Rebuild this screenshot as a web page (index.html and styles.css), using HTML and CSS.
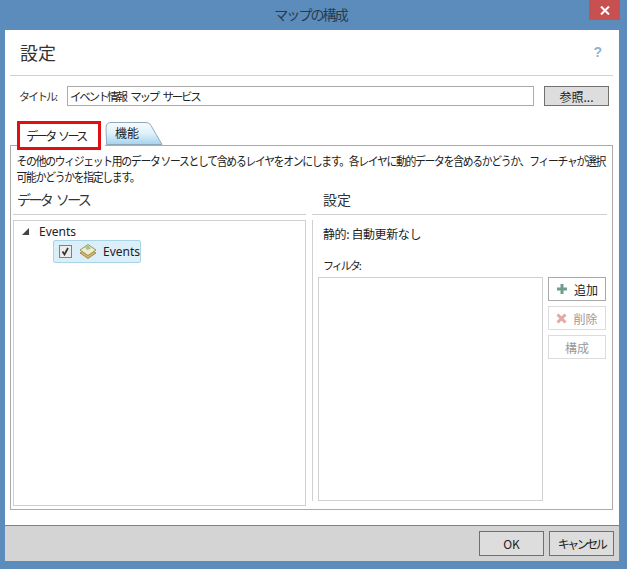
FILE: index.html
```html
<!DOCTYPE html>
<html lang="ja">
<head>
  <meta charset="UTF-8">
  <meta name="viewport" content="width=device-width, initial-scale=1.0">
  <title>マップの構成</title>
  <link rel="stylesheet" href="styles.css">
</head>
<body>
  <div class="titlebar">
    <span class="titlebar-text">マップの構成</span>
    <span class="close-btn">
      <svg width="10" height="9" viewBox="0 0 10 9"><path d="M1 0.5L9 8.5M9 0.5L1 8.5" stroke="#fff" stroke-width="2"/></svg>
    </span>
  </div>

  <div class="window">
    <div class="page-head">
      <h1>設定</h1>
      <span class="help">?</span>
    </div>

    <div class="title-row">
      <label>タイトル:</label>
      <input class="title-input" type="text" value="イベント情報 マップ サービス">
      <button class="btn browse-btn">参照...</button>
    </div>

    <div class="tabs">
      <div class="tab tab-active">データ ソース</div>
      <div class="tab tab-other">
        <svg class="tab-shape" width="58" height="23" viewBox="0 0 58 23">
          <defs>
            <linearGradient id="tabFill" x1="0" y1="0" x2="0" y2="1">
              <stop offset="0" stop-color="#f6fbfe"/>
              <stop offset="0.5" stop-color="#dff0fa"/>
              <stop offset="1" stop-color="#a5d3ef"/>
            </linearGradient>
          </defs>
          <path d="M1.5 22.5C1.5 14 0.5 5 1.5 3C2.5 1 4 0.5 6 0.5H40C43 0.5 45 1.5 46 3.5L57 22.5Z" fill="url(#tabFill)" stroke="#8fa9ba"/>
        </svg>
        <span class="tab-label">機能</span>
      </div>
      <div class="red-box"></div>
    </div>

    <div class="tab-panel">
      <p class="desc">その他のウィジェット用のデータ ソースとして含めるレイヤをオンにします。各レイヤに動的データを含めるかどうか、フィーチャが選択<br>可能かどうかを指定します。</p>

      <div class="columns">
        <div class="col-left">
          <h2>データ ソース</h2>
          <div class="tree">
            <div class="tree-root">
              <svg width="7" height="7" viewBox="0 0 7 7"><path d="M7 0V7H0Z" fill="#444"/></svg>
              <span>Events</span>
            </div>
            <div class="tree-item">
              <span class="check">
                <svg width="9" height="9" viewBox="0 0 9 9"><path d="M1.5 4.5L3.5 7.5L7 1" fill="none" stroke="#333" stroke-width="1.7"/></svg>
              </span>
              <svg class="layer-icon" width="18" height="15" viewBox="0 0 18 15">
                <path d="M9 4L17 9L9 14.5L1 9Z" fill="#d4b866" stroke="#8d7a3f" stroke-width="0.8"/>
                <path d="M9 0.5L17 6L9 11.5L1 6Z" fill="#f0ecd0" stroke="#8d7a3f" stroke-width="0.8"/>
                <path d="M6 3L9.5 1.5L12 4.5L8 6Z" fill="#a3c58a"/>
              </svg>
              <span>Events</span>
            </div>
          </div>
        </div>

        <div class="col-right">
          <h2>設定</h2>
          <div class="settings">
            <p class="static-text">静的: 自動更新なし</p>
            <p class="filter-label">フィルタ:</p>
            <div class="filter-row">
              <div class="filter-list"></div>
              <div class="filter-btns">
                <button class="btn side-btn">
                  <svg width="12" height="12" viewBox="0 0 12 12"><path d="M6 1V11M1 6H11" stroke="#6f9e8e" stroke-width="3"/></svg>
                  追加
                </button>
                <button class="btn side-btn side-off">
                  <svg width="11" height="11" viewBox="0 0 11 11"><path d="M1.5 1.5L9.5 9.5M9.5 1.5L1.5 9.5" stroke="#e3a9a3" stroke-width="3"/></svg>
                  削除
                </button>
                <button class="btn side-btn side-off">構成</button>
              </div>
            </div>
          </div>
        </div>
      </div>
    </div>

    <div class="footer">
      <button class="btn foot-btn">OK</button>
      <button class="btn foot-btn foot-cancel">キャンセル</button>
    </div>
  </div>
</body>
</html>
```

FILE: styles.css
```css
* {
  box-sizing: border-box;
}
body {
  font-family: "Noto Sans CJK JP", "Noto Sans", sans-serif;
  font-size: 12px;
  background-color: #5b8cbc;
  color: #222;
  margin: 0;
  height: 569px;
  overflow: hidden;
}
.titlebar {
  height: 30px;
  display: flex;
  justify-content: center;
  padding-top: 4px;
  padding-right: 6px;
  position: relative;
}
.titlebar-text {
  font-size: 14px;
  line-height: 20px;
  letter-spacing: -1.9px;
  color: #2c3a48;
}
.close-btn {
  position: absolute;
  top: 0;
  right: 7px;
  width: 31px;
  height: 20px;
  background-color: #c75050;
  display: flex;
  align-items: center;
  justify-content: center;
}
.window {
  margin-left: 5px;
  width: 614px;
  height: 531px;
  background: white;
  display: flex;
  flex-direction: column;
}
.page-head {
  height: 46px;
  margin-left: 5px;
  margin-right: 6px;
  border-bottom: 1px solid #d0d0d0;
  display: flex;
  justify-content: space-between;
  align-items: center;
  padding: 0 11px 0 10px;
}
.page-head h1 {
  font-size: 18px;
  font-weight: normal;
  margin: 0 0 2px;
  color: #333;
}
.help {
  font-size: 14px;
  font-weight: bold;
  color: #8fb2d2;
  font-family: "Liberation Sans", sans-serif;
  margin-bottom: 2px;
}
.title-row {
  display: flex;
  align-items: center;
  margin-top: 10px;
  padding-left: 14px;
}
.title-row label {
  width: 48px;
  font-size: 11px;
  letter-spacing: -2px;
  color: #333;
}
.title-input {
  width: 467px;
  height: 20px;
  border: 1px solid #ababab;
  padding: 0 2px;
  font-family: inherit;
  font-size: 11.5px;
  color: #222;
  outline: none;
  letter-spacing: -2.2px;
  word-spacing: 4px;
}
.btn {
  font-family: inherit;
  font-size: 12px;
  background-color: #ddd;
  border: 1px solid #707070;
  color: #222;
  padding: 0;
}
.browse-btn {
  width: 65px;
  height: 20px;
  margin-left: 10px;
}
.tabs {
  position: relative;
  height: 23px;
  margin-top: 16px;
  margin-left: 12px;
  display: flex;
}
.tab {
  height: 23px;
  line-height: 22px;
}
.tab-active {
  width: 88px;
  text-align: center;
  margin-top: 5px;
  padding-right: 10px;
  line-height: 18px;
  letter-spacing: -2.5px;
  word-spacing: 3px;
  background: white;
  position: relative;
  z-index: 2;
}
.tab-other {
  position: relative;
  width: 58px;
}
.tab-shape {
  display: block;
}
.tab-label {
  position: absolute;
  left: 10px;
  top: 0;
}
.red-box {
  position: absolute;
  left: 0;
  top: -1px;
  width: 84px;
  height: 29px;
  border: 3px solid #e01010;
  z-index: 3;
}
.tab-panel {
  margin-left: 5px;
  width: 603px;
  height: 365px;
  border: 1px solid #ababab;
  padding: 7px 5px 0 2px;
}
.desc {
  margin: 0;
  padding-left: 4px;
  font-size: 12px;
  line-height: 16px;
  letter-spacing: -1.42px;
  white-space: nowrap;
  transform: scaleX(0.9);
  transform-origin: left;
}
.columns {
  display: flex;
  margin-top: 4px;
}
.columns h2 {
  font-size: 14px;
  font-weight: normal;
  line-height: 20px;
  height: 26px;
  margin: 0;
  padding-left: 4px;
  border-bottom: 1px solid #d0d0d0;
  color: #333;
}
.col-left h2 {
  letter-spacing: -2.6px;
  word-spacing: 4px;
}
.col-left {
  width: 293px;
}
.tree {
  margin-top: 5px;
  height: 286px;
  border: 1px solid #d0d0d0;
  padding: 1px 0 0 8px;
}
.tree-root {
  display: flex;
  align-items: center;
  gap: 10px;
  height: 19px;
  font-family: "Noto Sans", sans-serif;
  font-size: 12px;
}
.tree-item {
  display: flex;
  align-items: center;
  width: 88px;
  height: 23px;
  margin-top: -1px;
  margin-left: 31px;
  padding-left: 5px;
  background-color: #dceef8;
  border: 1px solid #a9d5e8;
  border-radius: 2px;
  font-family: "Noto Sans", sans-serif;
  font-size: 12px;
}
.check {
  width: 13px;
  height: 13px;
  border: 1px solid #808080;
  background: #ececec;
  display: flex;
  align-items: center;
  justify-content: center;
}
.layer-icon {
  margin: 0 6px 0 7px;
}
.col-right {
  margin-left: 6px;
  width: 295px;
}
.col-right h2 {
  padding-left: 11px;
}
.settings {
  margin-top: 5px;
  height: 281px;
  border-left: 1px solid #d0d0d0;
  padding-left: 5px;
}
.settings p {
  margin: 0;
  padding-left: 5px;
}
.static-text {
  line-height: 18px;
  padding-top: 5px;
  height: 36px;
  letter-spacing: -0.4px;
}
.filter-label {
  line-height: 18px;
  height: 21px;
  font-size: 11px;
  letter-spacing: -2px;
}
.filter-row {
  display: flex;
  gap: 5px;
}
.filter-list {
  width: 225px;
  height: 224px;
  border: 1px solid #d0d0d0;
}
.filter-btns {
  display: flex;
  flex-direction: column;
  gap: 5px;
}
.side-btn {
  width: 58px;
  height: 24px;
  background: white;
  border-color: #a8a8a8;
  display: flex;
  align-items: center;
  justify-content: center;
  gap: 6px;
}
.side-off {
  border-color: #dcdcdc;
  color: #999;
}
.footer {
  margin-top: auto;
  height: 36px;
  background-color: #d4d4d4;
  border-top: 1px solid #808080;
  display: flex;
  justify-content: flex-end;
  gap: 5px;
  padding: 5px 5px 0 0;
}
.foot-btn {
  width: 65px;
  height: 25px;
}
.foot-cancel {
  letter-spacing: -2.5px;
}
```
